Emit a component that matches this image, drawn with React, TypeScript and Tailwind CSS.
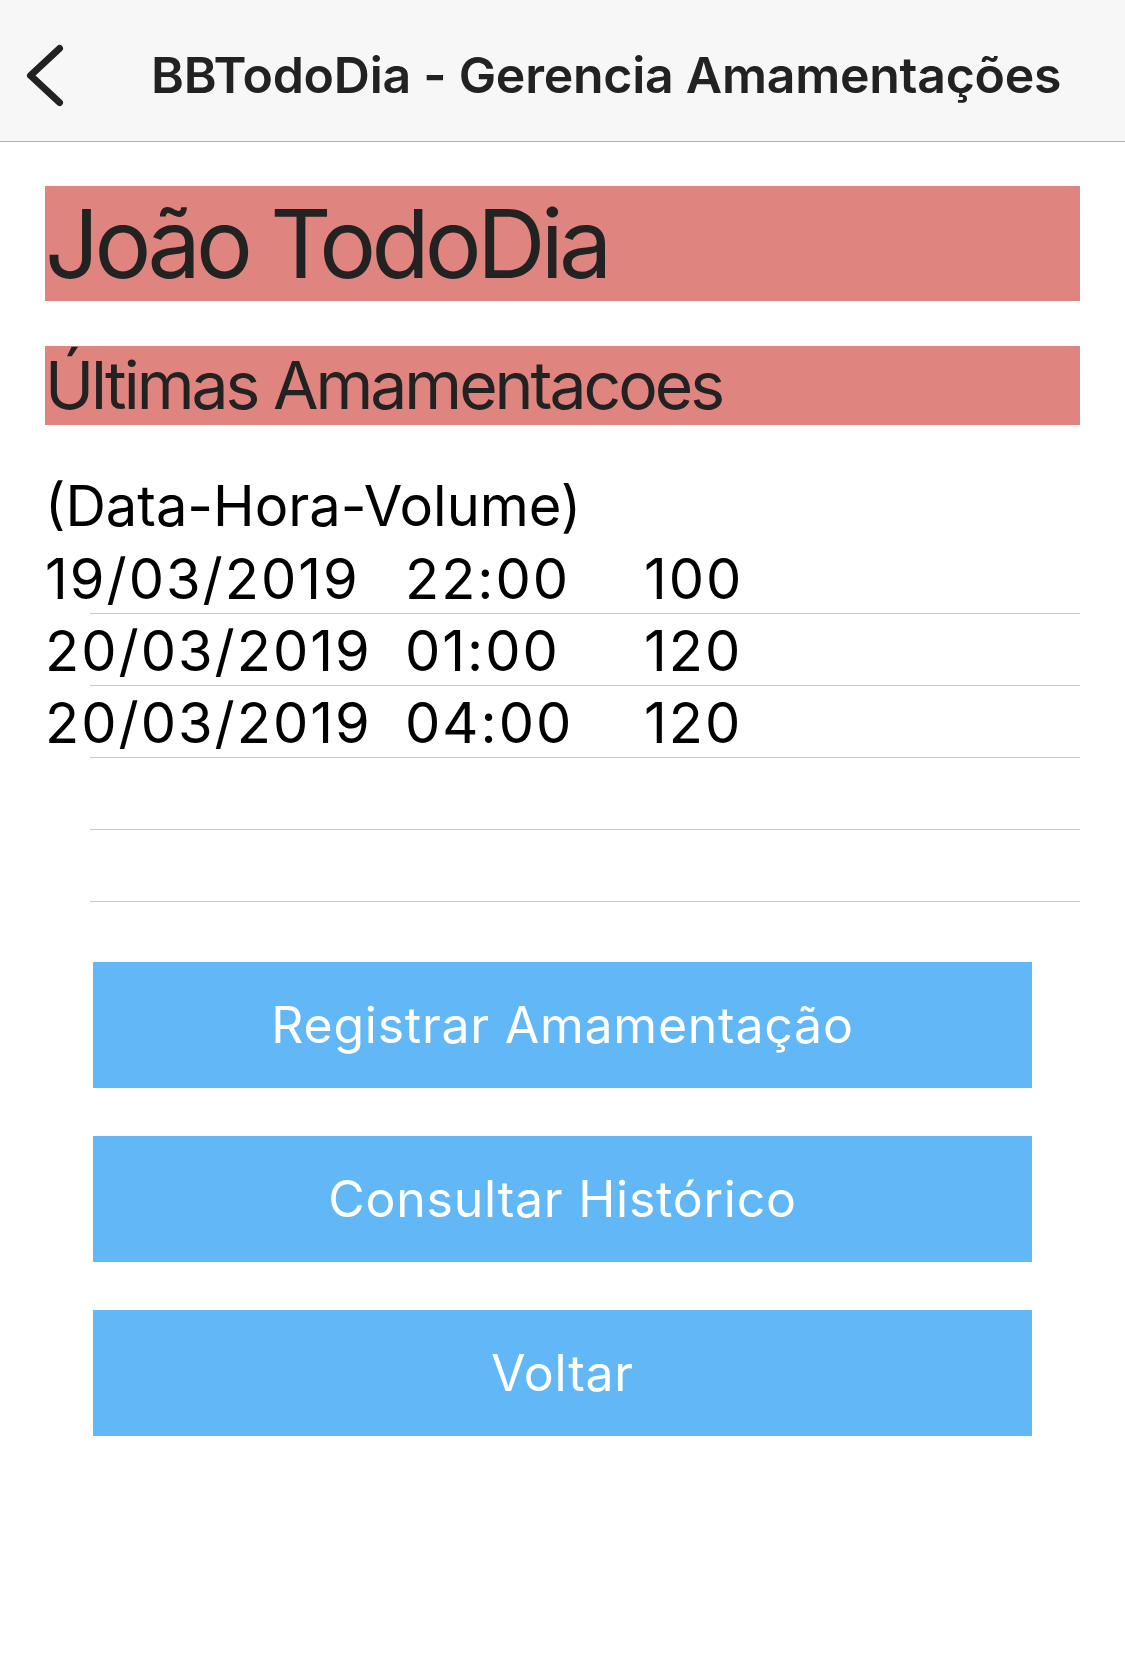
import React from "react";

const rows: [string, string, string][] = [
  ["19/03/2019", "22:00", "100"],
  ["20/03/2019", "01:00", "120"],
  ["20/03/2019", "04:00", "120"],
  ["", "", ""],
  ["", "", ""],
];

export default function App() {
  return (
    <div
      className="w-[1125px] min-h-[1667px] bg-white"
      style={{ fontFamily: "Inter, 'Noto Sans', sans-serif" }}
    >
      {/* Header */}
      <div className="relative h-[142px] bg-[#f7f7f7] border-b border-[#b2b2b2] flex items-start">
        <svg
          className="absolute left-[25px] top-[44px]"
          width="40"
          height="64"
          viewBox="0 0 40 64"
          fill="none"
        >
          <polyline
            points="34.5,4.5 5.5,31.5 34.5,58.5"
            stroke="#222222"
            strokeWidth="7"
            strokeLinecap="round"
            strokeLinejoin="round"
          />
        </svg>
        <div className="ml-[151px] mt-[45px] text-[50px] leading-[60px] tracking-[-0.25px] font-semibold text-[#222222] whitespace-nowrap">
          BBTodoDia - Gerencia Amamentações
        </div>
      </div>

      {/* Content */}
      <div className="px-[45px]">
        <div className="mt-[44px] h-[115px] bg-[#e0847f] text-[95px] leading-[115px] tracking-[-4.8px] text-[#222222] whitespace-nowrap overflow-hidden">
          João TodoDia
        </div>
        <div className="mt-[45px] h-[79px] bg-[#e0847f] text-[66px] leading-[79px] tracking-[-3px] text-[#222222] whitespace-nowrap overflow-hidden">
          Últimas Amamentacoes
        </div>

        <div className="mt-[45px] h-[72px] text-[56px] leading-[72px] text-black whitespace-nowrap">
          (Data-Hora-Volume)
        </div>
        <div className="flex flex-col">
          {rows.map((r, i) => (
            <div
              key={i}
              className="relative h-[72px] flex items-start pt-[1px] text-[56px] leading-[72px] tracking-[2px] text-black whitespace-nowrap"
            >
              <div className="w-[360px]">{r[0]}</div>
              <div className="w-[239px]">{r[1]}</div>
              <div>{r[2]}</div>
              <div className="absolute left-[45px] right-0 bottom-0 h-px bg-[#c8c7cc]" />
            </div>
          ))}
        </div>

        <div className="mt-[60px] mx-[48px] flex flex-col gap-[48px]">
          {["Registrar Amamentação", "Consultar Histórico", "Voltar"].map((t) => (
            <button
              key={t}
              className="h-[126px] bg-[#62b8f6] text-white text-[50px] leading-[126px] tracking-[0.75px] text-center whitespace-nowrap"
            >
              {t}
            </button>
          ))}
        </div>
      </div>
    </div>
  );
}
